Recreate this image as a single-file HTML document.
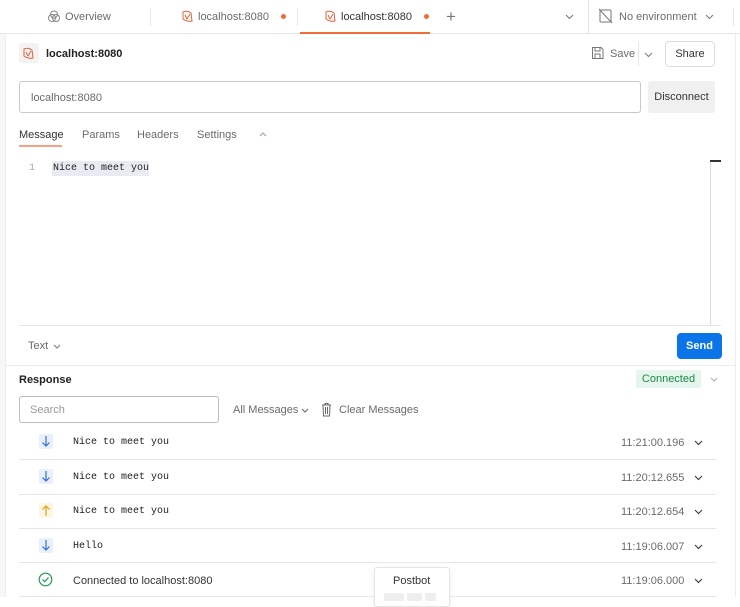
<!DOCTYPE html>
<html><head><style>
*{box-sizing:border-box;margin:0;padding:0}
body{width:740px;height:597px;overflow:hidden;background:#fff;font-family:"Liberation Sans",sans-serif;font-size:11px;color:#212121;position:relative}
.a{position:absolute;white-space:nowrap}
.mono{font-family:"Liberation Mono",monospace;font-size:10px}
.g{color:#6b6b6b}
.sep{position:absolute;left:19px;width:697px;height:1px;background:#e6e6e6}
</style></head><body>
<div class="a" style="left:0;top:34px;width:5px;height:563px;background:#f7f7f7"></div>
<div class="a" style="left:5px;top:34px;width:1px;height:563px;background:#ededed"></div>
<div class="a" style="left:735px;top:34px;width:1px;height:563px;background:#ededed"></div>
<div class="a" style="left:0;top:33px;width:740px;height:1px;background:#e6e6e6"></div>
<div class="a" style="left:150px;top:8px;width:1px;height:18px;background:#e6e6e6"></div>
<div class="a" style="left:297px;top:8px;width:1px;height:18px;background:#e6e6e6"></div>
<div class="a" style="left:588px;top:0;width:1px;height:33px;background:#e6e6e6"></div>
<div class="a" style="left:733px;top:8px;width:1px;height:18px;background:#e6e6e6"></div>
<svg class="a" style="left:47px;top:10px" width="14" height="13" viewBox="0 0 14 13" fill="none" stroke="#888" stroke-width="1"><circle cx="5" cy="8" r="3.5"/><circle cx="9" cy="8" r="3.5"/><circle cx="7" cy="4.5" r="3.5"/></svg>
<div class="a g" style="left:65px;top:11px">Overview</div>
<svg class="a" style="left:181px;top:9px" width="13" height="14" viewBox="0 0 13 14" fill="none" stroke="#e0603a" stroke-width="1"><path d="M2 3 Q6 1 10 4 L11 12 Q6 13 2 10 Z M4 6 L6 10 L9 5"/></svg>
<div class="a g" style="left:198px;top:11px">localhost:8080</div>
<div class="a" style="left:281px;top:14px;width:5px;height:5px;border-radius:50%;background:#f26b3a"></div>
<svg class="a" style="left:324px;top:9px" width="13" height="14" viewBox="0 0 13 14" fill="none" stroke="#e0603a" stroke-width="1"><path d="M2 3 Q6 1 10 4 L11 12 Q6 13 2 10 Z M4 6 L6 10 L9 5"/></svg>
<div class="a" style="left:341px;top:11px;color:#333">localhost:8080</div>
<div class="a" style="left:424px;top:14px;width:5px;height:5px;border-radius:50%;background:#f26b3a"></div>
<div class="a" style="left:300px;top:32px;width:130px;height:2px;background:#f26b3a"></div>
<div class="a" style="left:446px;top:7px;font-size:17px;color:#777">+</div>
<svg class="a" style="left:565px;top:14px" width="9" height="6" viewBox="0 0 9 6" fill="none" stroke="#777"><path d="M1 1 L4.5 4.5 L8 1"/></svg>
<svg class="a" style="left:598px;top:8px" width="15" height="16" viewBox="0 0 15 16" fill="none" stroke="#777"><rect x="2" y="2" width="11" height="12" rx="1"/><path d="M1 1 L14 15"/></svg>
<div class="a g" style="left:619px;top:11px">No environment</div>
<svg class="a" style="left:705px;top:14px" width="9" height="6" viewBox="0 0 9 6" fill="none" stroke="#777"><path d="M1 1 L4.5 4.5 L8 1"/></svg>
<div class="a" style="left:19px;top:43px;width:20px;height:20px;background:#f3f3f3;border-radius:3px"></div>
<svg class="a" style="left:22px;top:46px" width="13" height="14" viewBox="0 0 13 14" fill="none" stroke="#e0603a" stroke-width="1"><path d="M2 3 Q6 1 10 4 L11 12 Q6 13 2 10 Z M4 6 L6 10 L9 5"/></svg>
<div class="a" style="left:46px;top:48px;font-weight:bold;color:#222">localhost:8080</div>
<svg class="a" style="left:591px;top:46px" width="13" height="14" viewBox="0 0 13 14" fill="none" stroke="#777"><path d="M1.5 1.5 H10 L12 3.5 V12.5 H1.5 Z M4 1.5 V5 H9 V1.5 M4 12.5 V8 H9 V12.5"/></svg>
<div class="a g" style="left:610px;top:48px">Save</div>
<div class="a" style="left:638px;top:41px;width:1px;height:25px;background:#e6e6e6"></div>
<svg class="a" style="left:644px;top:52px" width="9" height="6" viewBox="0 0 9 6" fill="none" stroke="#777"><path d="M1 1 L4.5 4.5 L8 1"/></svg>
<div class="a" style="left:665px;top:41px;width:50px;height:26px;border:1px solid #dcdcdc;border-radius:4px;text-align:center;line-height:25px;color:#333">Share</div>
<div class="a" style="left:19px;top:81px;width:622px;height:32px;border:1px solid #c9c9c9;border-radius:3px"></div>
<div class="a g" style="left:31px;top:92px">localhost:8080</div>
<div class="a" style="left:648px;top:81px;width:67px;height:32px;background:#f0f0f0;border-radius:3px;text-align:center;line-height:33px;color:#333">Disconnect</div>
<div class="a" style="left:19px;top:129px;color:#333">Message</div>
<div class="a" style="left:19px;top:145px;width:43px;height:2px;background:#f7a185"></div>
<div class="a g" style="left:82px;top:129px">Params</div>
<div class="a g" style="left:137px;top:129px">Headers</div>
<div class="a g" style="left:197px;top:129px">Settings</div>
<svg class="a" style="left:259px;top:132px" width="8" height="5" viewBox="0 0 8 5" fill="none" stroke="#999"><path d="M1 4 L4 1 L7 4"/></svg>
<div class="a mono" style="left:29px;top:163px;color:#aaa">1</div>
<div class="a" style="left:52px;top:161px;width:97px;height:15px;background:#e8ecf2"></div>
<div class="a mono" style="left:53px;top:163px;color:#222">Nice to meet you</div>
<div class="a" style="left:710px;top:160px;width:1px;height:165px;background:#ddd"></div>
<div class="a" style="left:710px;top:160px;width:11px;height:2px;background:#333"></div>
<div class="a" style="left:19px;top:325px;width:702px;height:1px;background:#e6e6e6"></div>
<div class="a g" style="left:28px;top:340px">Text</div>
<svg class="a" style="left:53px;top:344px" width="8" height="5" viewBox="0 0 8 5" fill="none" stroke="#777"><path d="M1 1 L4 4 L7 1"/></svg>
<div class="a" style="left:677px;top:333px;width:45px;height:26px;background:#0b74e8;border-radius:4px;color:#fff;font-weight:bold;text-align:center;line-height:26px">Send</div>
<div class="a" style="left:5px;top:365px;width:730px;height:1px;background:#ebebeb"></div>
<div class="a" style="left:19px;top:374px;font-weight:bold;color:#222">Response</div>
<div class="a" style="left:636px;top:370px;width:65px;height:18px;background:#e7f6ec;color:#1b8a4c;text-align:center;line-height:19px">Connected</div>
<svg class="a" style="left:710px;top:377px" width="8" height="5" viewBox="0 0 8 5" fill="none" stroke="#aaa"><path d="M1 1 L4 4 L7 1"/></svg>
<div class="a" style="left:19px;top:396px;width:200px;height:27px;border:1px solid #bdbdbd;border-radius:3px"></div>
<div class="a" style="left:30px;top:404px;color:#999">Search</div>
<div class="a g" style="left:233px;top:404px">All Messages</div>
<svg class="a" style="left:301px;top:408px" width="8" height="5" viewBox="0 0 8 5" fill="none" stroke="#666"><path d="M1 1 L4 4 L7 1"/></svg>
<svg class="a" style="left:321px;top:402px" width="11" height="15" viewBox="0 0 11 15" fill="none" stroke="#666"><path d="M1 3 H10 M4 3 V1.5 H7 V3 M2 3 L2.5 14 H8.5 L9 3 M4.5 5 V12 M6.5 5 V12"/></svg>
<div class="a g" style="left:339px;top:404px">Clear Messages</div>
<div class="sep" style="top:459px"></div>
<div class="sep" style="top:494px"></div>
<div class="sep" style="top:528px"></div>
<div class="sep" style="top:562px"></div>
<div class="sep" style="top:596px"></div>

<div class="a" style="left:39px;top:434px;width:14px;height:15px;background:#eaf0fb;border-radius:2px"></div>
<svg class="a" style="left:41px;top:435px" width="10" height="13" viewBox="0 0 10 13" fill="none" stroke="#2f6fd6" stroke-width="1.2"><path d="M5 1 V11 M1.5 7.5 L5 11 L8.5 7.5"/></svg>
<div class="a mono" style="left:73px;top:437px">Nice to meet you</div>
<div class="a g" style="left:621px;top:437px">11:21:00.196</div>

<div class="a" style="left:39px;top:469px;width:14px;height:15px;background:#eaf0fb;border-radius:2px"></div>
<svg class="a" style="left:41px;top:470px" width="10" height="13" viewBox="0 0 10 13" fill="none" stroke="#2f6fd6" stroke-width="1.2"><path d="M5 1 V11 M1.5 7.5 L5 11 L8.5 7.5"/></svg>
<div class="a mono" style="left:73px;top:472px">Nice to meet you</div>
<div class="a g" style="left:621px;top:472px">11:20:12.655</div>

<div class="a" style="left:39px;top:503px;width:14px;height:15px;background:#fdf6e3;border-radius:2px"></div>
<svg class="a" style="left:41px;top:504px" width="10" height="13" viewBox="0 0 10 13" fill="none" stroke="#e0a020" stroke-width="1.2"><path d="M5 12 V2 M1.5 5.5 L5 2 L8.5 5.5"/></svg>
<div class="a mono" style="left:73px;top:506px">Nice to meet you</div>
<div class="a g" style="left:621px;top:506px">11:20:12.654</div>

<div class="a" style="left:39px;top:538px;width:14px;height:15px;background:#eaf0fb;border-radius:2px"></div>
<svg class="a" style="left:41px;top:539px" width="10" height="13" viewBox="0 0 10 13" fill="none" stroke="#2f6fd6" stroke-width="1.2"><path d="M5 1 V11 M1.5 7.5 L5 11 L8.5 7.5"/></svg>
<div class="a mono" style="left:73px;top:541px">Hello</div>
<div class="a g" style="left:621px;top:541px">11:19:06.007</div>

<svg class="a" style="left:38px;top:572px" width="15" height="15" viewBox="0 0 15 15" fill="none" stroke="#1f9a4f" stroke-width="1.2"><circle cx="7.5" cy="7.5" r="6.3"/><path d="M4.5 7.5 L6.7 9.7 L10.5 5.5"/></svg>
<div class="a" style="left:73px;top:575px;color:#333">Connected to localhost:8080</div>
<div class="a g" style="left:621px;top:575px">11:19:06.000</div>

<svg class="a" style="left:694px;top:440px" width="9" height="6" viewBox="0 0 9 6" fill="none" stroke="#444" stroke-width="1.2"><path d="M1 1 L4.5 4.5 L8 1"/></svg>
<svg class="a" style="left:694px;top:475px" width="9" height="6" viewBox="0 0 9 6" fill="none" stroke="#444" stroke-width="1.2"><path d="M1 1 L4.5 4.5 L8 1"/></svg>
<svg class="a" style="left:694px;top:509px" width="9" height="6" viewBox="0 0 9 6" fill="none" stroke="#444" stroke-width="1.2"><path d="M1 1 L4.5 4.5 L8 1"/></svg>
<svg class="a" style="left:694px;top:544px" width="9" height="6" viewBox="0 0 9 6" fill="none" stroke="#444" stroke-width="1.2"><path d="M1 1 L4.5 4.5 L8 1"/></svg>
<svg class="a" style="left:694px;top:578px" width="9" height="6" viewBox="0 0 9 6" fill="none" stroke="#444" stroke-width="1.2"><path d="M1 1 L4.5 4.5 L8 1"/></svg>

<div class="a" style="left:374px;top:567px;width:76px;height:40px;background:#fff;border:1px solid #e6e6e6;border-radius:3px;box-shadow:0 1px 4px rgba(0,0,0,.08)"></div>
<div class="a" style="left:393px;top:575px;color:#333">Postbot</div>
<div class="a" style="left:384px;top:593px;width:20px;height:8px;background:#eee;border-radius:2px"></div>
<div class="a" style="left:407px;top:593px;width:15px;height:8px;background:#eee;border-radius:2px"></div>
<div class="a" style="left:425px;top:593px;width:11px;height:8px;background:#eee;border-radius:2px"></div>
</body></html>
